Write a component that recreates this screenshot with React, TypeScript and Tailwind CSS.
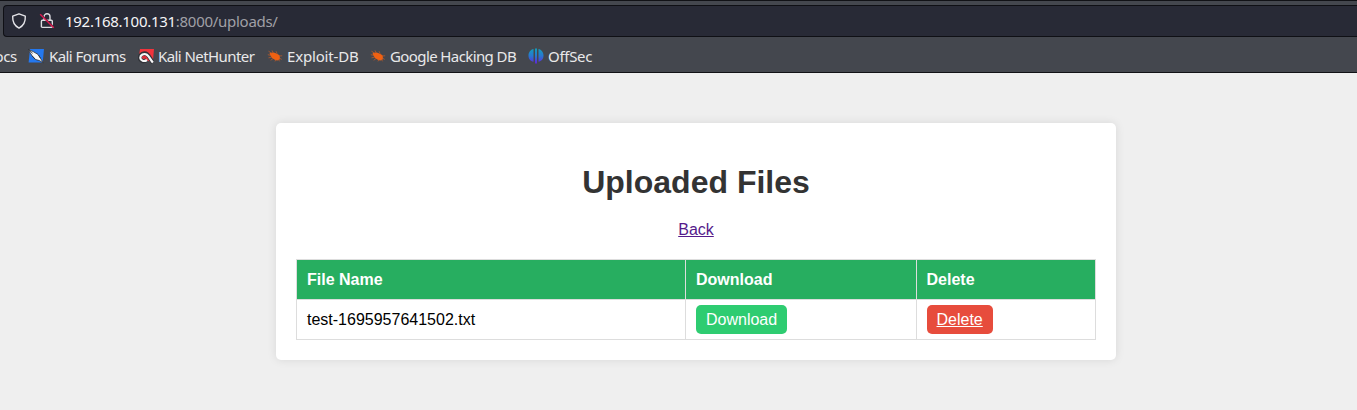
import React from "react";

function Shield() {
  return (
    <svg width="16" height="16" viewBox="0 0 16 16" fill="none" stroke="#e4e4e8" strokeWidth="1.4" strokeLinejoin="round">
      <path d="M8 .8 14.3 3.2C14.6 8.2 13 12.4 8 15.1 3 12.4 1.4 8.2 1.7 3.2Z" />
    </svg>
  );
}

function InsecureLock() {
  return (
    <svg width="16" height="16" viewBox="0 0 16 16" fill="none">
      <path d="M5 6.5V3.8a3 3 0 0 1 6 0v3.4M3.4 7.2h8.9a1 1 0 0 1 1 1v5.2a1 1 0 0 1-1 1H3.4a1 1 0 0 1-1-1V8.2a1 1 0 0 1 1-1Z" stroke="#dcdce0" strokeWidth="1.4" />
      <path d="m1.8 1.2 13.2 13.1" stroke="#282a36" strokeWidth="1.4" />
      <path d="m1.2 1.2 13.6 13.6" stroke="#e0184f" strokeWidth="1.4" />
    </svg>
  );
}

function ForumsIcon() {
  return (
    <svg width="16" height="16" viewBox="0 0 16 16">
      <path d="M2 1h14l-1.3 13.6H.6Z" fill="#2478ef" />
      <path d="m0 1.3 5.2 2.3 4.8 2.8 2.2 3.4 3 5-3.7-2.2-3.8-1L4.1 7.8Z" fill="#f6f7f8" stroke="#303238" strokeWidth=".8" />
      <path d="m.3 1.3 4.3 4M3.9 7.8l3.4 3.6M10.6 7.2l1.8 2.8" stroke="#303238" strokeWidth=".9" fill="none" />
    </svg>
  );
}

function NetHunterIcon() {
  return (
    <svg width="16" height="16" viewBox="0 0 16 16">
      <path d="M2 1h14l-1.2 13.6L6 11.5.8 9Z" fill="#f2333c" />
      <path d="M8.7 11.9C5.5 14.4 1.8 12.5 1.9 9.5 2 6.4 6.2 4.3 9 6.2c2.7 1.8 3.2 5.3 6 8.5" stroke="#303238" strokeWidth="4.2" fill="none" />
      <path d="M9 12C6 14.1 2.5 12.6 2.3 9.8 2.2 7 6 4.9 8.8 6.7c2.6 1.7 3.4 4.7 6.1 7.8" stroke="#f6f6f7" strokeWidth="2.2" fill="none" />
      <path d="M4.6 9.6c1.2-1.6 3-.9 3.8.6" stroke="#d72c3b" strokeWidth="1.4" fill="none" />
    </svg>
  );
}

function BugIcon() {
  return (
    <svg width="16" height="16" viewBox="0 0 16 16">
      <path d="M2.6 5.2C5.8 3.5 10 5 12.8 7.7l.2 3.6-2.7 1.3C6.8 11.9 3.4 9.3 2.6 5.2Z" fill="#f16112" />
      <path d="m1.5 3.2 3 2M5 2.4l1.3 2.5M9 3.2l1.2 2.5M.8 6.7 4 7.4M1.5 9.8l3-.5M3.7 12.3l2.3-1.7M8 13.4l.8-1.7M12 8l3.2-.2M12 9.9l2.7 1.5M11.5 11.7l1.1 1.6" stroke="#b95a29" strokeWidth=".8" />
    </svg>
  );
}

function OffSecIcon() {
  return (
    <svg width="16" height="16" viewBox="0 0 16 16">
      <defs>
        <linearGradient id="offsec" x1="0" y1="0" x2="0" y2="16" gradientUnits="userSpaceOnUse">
          <stop stopColor="#11a1ba" />
          <stop offset=".5" stopColor="#2877d0" />
          <stop offset="1" stopColor="#6420dd" />
        </linearGradient>
      </defs>
      <path d="M5.5 1v12.7C2.6 13.4.5 11 .5 7.5.5 4.4 2.6 1.6 5.5 1ZM7 .5h2v15H7ZM10.5 1c2.9.6 5 3.4 5 6.5 0 3.5-2.1 5.9-5 6.2Z" fill="url(#offsec)" />
    </svg>
  );
}

const bookmarks = [
  { label: "Kali Forums", icon: <ForumsIcon />, width: "w-[109px]", tracking: "tracking-[-0.57px]" },
  { label: "Kali NetHunter", icon: <NetHunterIcon />, width: "w-[129px]", tracking: "tracking-[-0.57px]" },
  { label: "Exploit-DB", icon: <BugIcon />, width: "w-[103px]", tracking: "tracking-[-0.17px]" },
  { label: "Google Hacking DB", icon: <BugIcon />, width: "w-[158px]", tracking: "tracking-[-0.6px]" },
  { label: "OffSec", icon: <OffSecIcon />, width: "w-[70px]", tracking: "tracking-[-0.3px]" },
];

export default function App() {
  return (
    <div className="h-[410px] w-full overflow-hidden bg-[#efefef] font-['Liberation_Sans',sans-serif] text-base text-black">
      <header className="h-[73px] border-y border-[#111216] bg-[#44474e] pt-1 font-['Noto_Sans',sans-serif]">
        <div className="ml-[3px] flex h-8 items-center rounded-l-[4px] border border-r-0 border-[#0f1015] bg-[#282a36] pl-[7px]">
          <Shield />
          <span className="ml-3 flex"><InsecureLock /></span>
          <span className="ml-[10px] whitespace-nowrap text-[15px] leading-5 tracking-[-0.28px] text-[#a0a0a6]">
            <span className="text-[#f5f5f7]">192.168.100.131</span>:8000/uploads/
          </span>
        </div>
        <nav className="flex h-[35px] items-center pt-[3px] text-[15px] leading-5 whitespace-nowrap text-[#e9e9ea]">
          <div className="flex w-[28px] shrink-0 justify-end overflow-hidden pr-[11px] tracking-[-0.3px]">ocs</div>
          {bookmarks.map(({ label, icon, width, tracking }, index) => (
            <a key={label} className={`flex shrink-0 items-center ${index === 0 ? "w-[110px] gap-[5px]" : `${width} gap-1`}`}>
              <span className="shrink-0">{icon}</span>
              <span className={tracking}>{label}</span>
            </a>
          ))}
        </nav>
      </header>

      <main className="ml-[276px] mt-[50px] h-[237px] w-[840px] rounded-[5px] bg-white px-5 pt-[41px] text-center shadow-[0_0_10px_rgba(0,0,0,0.1)]">
        <h1 className="text-[32px] leading-[37px] font-bold text-[#333333]">Uploaded Files</h1>
        <a className="mt-5 inline-block leading-[18px] text-[#551a8b] underline">Back</a>
        <table className="mt-[17px] w-[800px] table-fixed border-collapse text-left leading-[18px]">
          <colgroup>
            <col className="w-[389px]" />
            <col className="w-[231px]" />
            <col className="w-[179px]" />
          </colgroup>
          <thead>
            <tr className="h-10 bg-[#27ae60] text-white">
              <th className="border border-[#dddddd] px-[10px] py-0">File Name</th>
              <th className="border border-[#dddddd] px-[10px] py-0">Download</th>
              <th className="border border-[#dddddd] px-[9.5px] py-0">Delete</th>
            </tr>
          </thead>
          <tbody>
            <tr className="h-10">
              <td className="border border-[#dddddd] px-[10px] py-0">test-1695957641502.txt</td>
              <td className="border border-[#dddddd] px-[10px] py-0">
                <a className="block h-[29px] w-fit rounded-[5px] bg-[#2ecc71] px-[10px] leading-[29px] text-white">Download</a>
              </td>
              <td className="border border-[#dddddd] px-[9.5px] py-0">
                <a className="block h-[29px] w-fit rounded-[5px] bg-[#e74c3c] px-[10px] leading-[29px] text-white underline">Delete</a>
              </td>
            </tr>
          </tbody>
        </table>
      </main>
    </div>
  );
}
